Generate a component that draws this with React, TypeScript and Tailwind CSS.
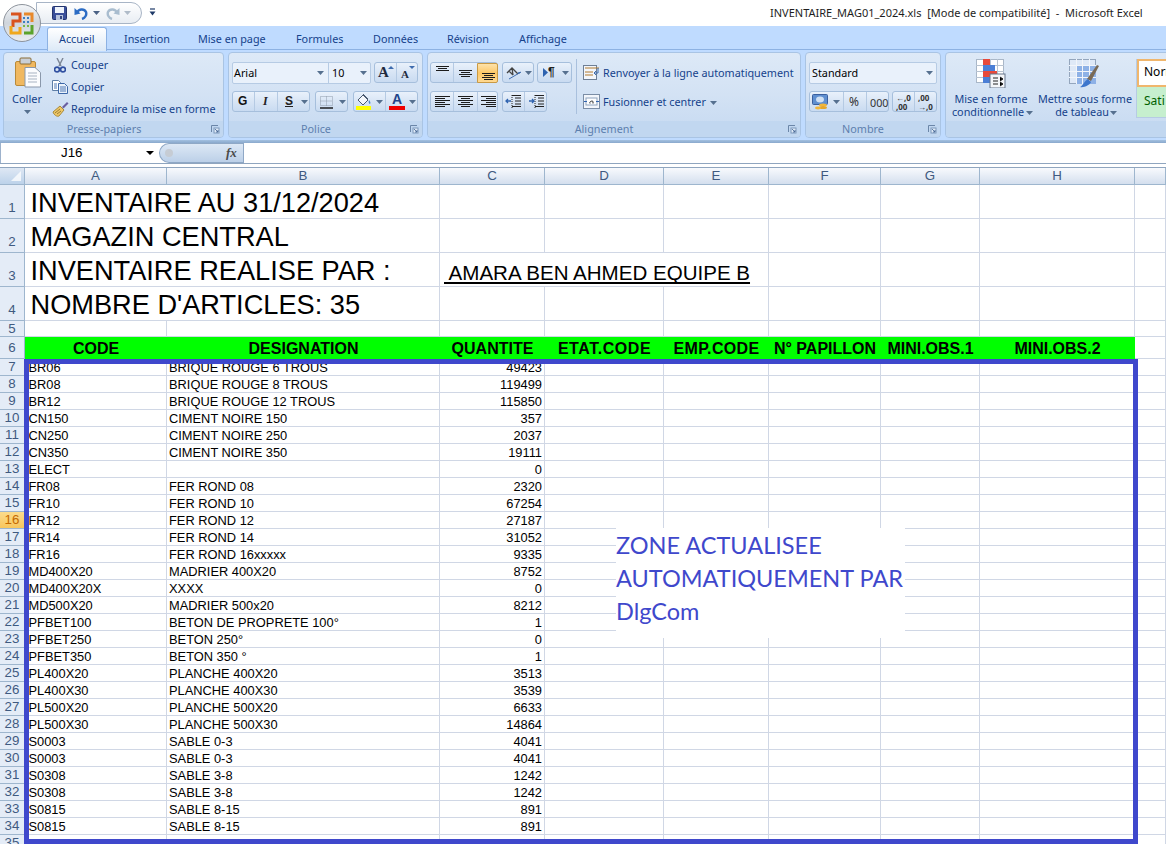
import React from "react";

const tabs: [string, number][] = [["Insertion", 124], ["Mise en page", 198], ["Formules", 296], ["Données", 373], ["Révision", 447], ["Affichage", 519]];
const rows: [string, string, string][] = [
  ["BR06", "BRIQUE ROUGE 6 TROUS", "49423"], ["BR08", "BRIQUE ROUGE 8 TROUS", "119499"], ["BR12", "BRIQUE ROUGE 12 TROUS", "115850"],
  ["CN150", "CIMENT NOIRE 150", "357"], ["CN250", "CIMENT NOIRE 250", "2037"], ["CN350", "CIMENT NOIRE 350", "19111"],
  ["ELECT", "", "0"], ["FR08", "FER ROND 08", "2320"], ["FR10", "FER ROND 10", "67254"], ["FR12", "FER ROND 12", "27187"],
  ["FR14", "FER ROND 14", "31052"], ["FR16", "FER ROND 16xxxxx", "9335"], ["MD400X20", "MADRIER 400X20", "8752"],
  ["MD400X20X", "XXXX", "0"], ["MD500X20", "MADRIER 500x20", "8212"], ["PFBET100", "BETON DE PROPRETE 100°", "1"],
  ["PFBET250", "BETON 250°", "0"], ["PFBET350", "BETON 350 °", "1"], ["PL400X20", "PLANCHE 400X20", "3513"],
  ["PL400X30", "PLANCHE 400X30", "3539"], ["PL500X20", "PLANCHE 500X20", "6633"], ["PL500X30", "PLANCHE 500X30", "14864"],
  ["S0003", "SABLE 0-3", "4041"], ["S0003", "SABLE 0-3", "4041"], ["S0308", "SABLE 3-8", "1242"], ["S0308", "SABLE 3-8", "1242"],
  ["S0815", "SABLE 8-15", "891"], ["S0815", "SABLE 8-15", "891"], ["S1524", "SABLE 15-24", "1115"],
];
const cols = ["A", "B", "C", "D", "E", "F", "G", "H", ""];
const greenHead = ["CODE", "DESIGNATION", "QUANTITE", "ETAT.CODE", "EMP.CODE", "N° PAPILLON", "MINI.OBS.1", "MINI.OBS.2"];
const GRID = "grid grid-cols-[25px_142px_273px_105px_119px_105px_112px_99px_155px_31px]";
const line = "border-r border-b border-[#d0d7e5]";
const rowHead = "flex justify-center border-r border-b border-[#9eb6ce] text-[13.33px] ";

const Caret = ({ x, y, c = "#56708f" }: { x: number; y: number; c?: string }) => (
  <svg className="absolute" style={{ left: x, top: y }} width="7" height="4" viewBox="0 0 7 4"><path d="M0 0h7L3.5 4z" fill={c} /></svg>
);
const Launcher = ({ x }: { x: number }) => (
  <svg className="absolute" style={{ left: x, top: 125 }} width="9" height="9" viewBox="0 0 9 9" fill="none">
    <path d="M.5 7V.5H7" stroke="#6b86a8" /><rect x="3" y="3" width="5" height="5" fill="#dfeaf7" stroke="#7d98ba" /><path d="M4 4l3 3M5 7h2V5" stroke="#3d5f8f" strokeWidth=".8" />
  </svg>
);
const Box = ({ l, t, w, h = 21 }: { l: number; t: number; w: number; h?: number }) => (
  <div className="absolute rounded-[3px] border border-[#a6bfdc] bg-gradient-to-b from-[#e9f1fb] via-[#d8e5f5] to-[#c9dbf1]" style={{ left: l, top: t, width: w, height: h }} />
);
const Sep = ({ x, y }: { x: number; y: number }) => <div className="absolute w-px h-[19px] bg-[#b5cae3]" style={{ left: x, top: y }} />;
const Lines = ({ x, y, rows: r }: { x: number; y: number; rows: [number, number][] }) => (
  <svg className="absolute" style={{ left: x, top: y }} width="18" height="15" viewBox="0 0 18 15">
    {r.map(([a, b], i) => <path key={i} d={`M${a} ${i * 2 + .5}H${b}`} stroke="#1c1c1c" />)}
  </svg>
);
const L = ({ x, y, children, cls = "" }: { x: number; y: number; children: React.ReactNode; cls?: string }) => (
  <span className={"absolute whitespace-nowrap leading-[14px] " + cls} style={{ left: x, top: y }}>{children}</span>
);
const C = ({ cx, y, children, cls = "" }: { cx: number; y: number; children: React.ReactNode; cls?: string }) => (
  <span className={"absolute whitespace-nowrap leading-[14px] -translate-x-1/2 " + cls} style={{ left: cx, top: y }}>{children}</span>
);
const Group = ({ l, w }: { l: number; w: number }) => (
  <div className="absolute top-[52px] h-[86px] rounded-[4px] border border-[#a9c4e4] bg-gradient-to-b from-[#dde9f7] via-[#d3e2f4] to-[#c5d9f1] overflow-hidden" style={{ left: l, width: w }}>
    <div className="absolute left-0 right-0 bottom-0 h-[16px] bg-[#c1d7f0]" />
  </div>
);

export default function App() {
  return (
    <div className="relative w-[1166px] h-[844px] overflow-hidden bg-white font-[Liberation_Sans,sans-serif] text-black">
      {/* title bar */}
      <div className="absolute inset-x-0 top-0 h-[26px] bg-white">
        <div className="absolute left-[36px] top-[2px] w-[106px] h-[22px] rounded-r-[12px] border border-[#a8b5c6] bg-gradient-to-b from-[#ffffff] to-[#e8edf3]" />
        <svg className="absolute left-[52px] top-[6px]" width="15" height="14" viewBox="0 0 15 14">
          <rect x=".5" y=".5" width="14" height="13" rx="1" fill="#3a4f9a" stroke="#24346f" />
          <rect x="3" y="1" width="9" height="6" fill="#eef3fb" /><rect x="4" y="9" width="7" height="5" fill="#b8c4dd" /><rect x="8" y="10" width="2" height="3" fill="#33457f" />
        </svg>
        <svg className="absolute left-[74px] top-[6px]" width="14" height="14" viewBox="0 0 14 14" fill="none">
          <path d="M3 7c1-4 7-5 9-1 1 3-1 6-4 7" stroke="#2b6cc4" strokeWidth="2.4" /><path d="M.5 2l6 5.5L.5 9z" fill="#2b6cc4" />
        </svg>
        <Caret x={93} y={11} c="#4a6285" />
        <svg className="absolute left-[106px] top-[6px]" width="14" height="14" viewBox="0 0 14 14" fill="none">
          <path d="M11 7c-1-4-7-5-9-1-1 3 1 6 4 7" stroke="#a9bdcf" strokeWidth="2.4" /><path d="M13.5 2l-6 5.5 6 1.5z" fill="#a9bdcf" />
        </svg>
        <Caret x={124} y={11} c="#b0bcc9" />
        <svg className="absolute left-[149px] top-[8px]" width="7" height="8" viewBox="0 0 7 8"><path d="M1 1h5" stroke="#1f3a68" strokeWidth="1.2" /><path d="M.5 3.5h6L3.5 7.5z" fill="#1f3a68" /></svg>
        <span className="absolute left-[770px] top-[5px] text-[11px] leading-[16px] whitespace-pre text-[#1e1e1e] font-[Noto_Sans,sans-serif]">INVENTAIRE_MAG01_2024.xls  [Mode de compatibilité]  -  Microsoft Excel</span>
      </div>

      {/* ribbon */}
      <div className="absolute inset-x-0 top-[26px] h-[114px] bg-[#bfdbff]">
        <div className="absolute inset-x-0 top-[23px] h-px bg-[#8db2e3]" />
      </div>
      <div className="absolute inset-x-0 top-[140px] h-[3px] bg-gradient-to-b from-[#a3c0e0] to-[#8aa9cc]" />
      <div className="absolute left-[47px] top-[27px] w-[60px] h-[24px] rounded-t-[3px] border border-b-0 border-[#8db2e3] bg-gradient-to-b from-[#ffffff] to-[#dce9f7]" />

      {/* office button */}
      <div className="absolute left-[3px] top-[4px] w-[38px] h-[38px] rounded-full border border-[#8d939c] bg-gradient-to-b from-[#f4f6f9] via-[#cfd5dc] to-[#e9edf1]" />
      <svg className="absolute left-[9px] top-[11px]" width="26" height="24" viewBox="0 0 26 24" fill="none">
        <path d="M2 3h9v7H4v6" stroke="#d9531e" strokeWidth="3" /><path d="M15 3h8v8" stroke="#e8892c" strokeWidth="3" />
        <path d="M2 15v7h9v-6" stroke="#f0a81c" strokeWidth="3" /><path d="M23 14v8h-8" stroke="#5ba32b" strokeWidth="3" />
        <path d="M14 7h2M18 7h2M14 11h2M18 11h2" stroke="#3d7ec4" strokeWidth="2" /><path d="M14 15h2M18 15h2" stroke="#79b84a" strokeWidth="2" />
      </svg>

      <div className="absolute inset-0 font-[Noto_Sans,sans-serif] text-[10.8px] text-[#15428b]">
        <L x={59} y={32}>Accueil</L>
        {tabs.map(([t, x]) => <L key={t} x={x} y={32}>{t}</L>)}

        <Group l={3} w={221} />
        <Group l={228} w={195} />
        <Group l={427} w={374} />
        <Group l={805} w={136} />
        <Group l={945} w={225} />

        {/* clipboard */}
        <svg className="absolute left-[15px] top-[57px]" width="27" height="32" viewBox="0 0 27 32">
          <rect x=".5" y="4.5" width="20" height="24" rx="1.5" fill="#f0b860" stroke="#b98a3a" />
          <rect x="5" y="1" width="11" height="6" rx="1" fill="#c9cfd6" stroke="#8b6d35" />
          <path d="M10 10.5h10l5.5 5v14.5H10z" fill="#fbfcfe" stroke="#8a98ab" />
          <path d="M13 16h9M13 19h9M13 22h9M13 25h9" stroke="#a8b3c2" />
        </svg>
        <L x={12} y={92} cls="text-[11px]">Coller</L>
        <Caret x={24} y={110} />
        <svg className="absolute left-[54px] top-[58px]" width="12" height="15" viewBox="0 0 12 15" fill="none">
          <path d="M3 0l4 8M9 0L5 8" stroke="#7b8594" strokeWidth="1.4" /><circle cx="3" cy="11.5" r="2.4" stroke="#2f4fa0" strokeWidth="1.6" /><circle cx="9" cy="11.5" r="2.4" stroke="#2f4fa0" strokeWidth="1.6" />
        </svg>
        <L x={71} y={58}>Couper</L>
        <svg className="absolute left-[52px] top-[80px]" width="16" height="14" viewBox="0 0 16 14">
          <path d="M.5.5h6l2 2v8h-8z" fill="#fff" stroke="#5e7ea6" /><path d="M6.5 3.5h6l3 3v7h-9z" fill="#eaf2fb" stroke="#3d68a8" /><path d="M8 7h6M8 9h6M8 11h6M2 4h3M2 6h3M2 8h3" stroke="#4f78b4" />
        </svg>
        <L x={71} y={80}>Copier</L>
        <svg className="absolute left-[52px] top-[101px]" width="17" height="16" viewBox="0 0 17 16">
          <path d="M10 6l5-5 1.5 1.5-5 5z" fill="#6a5fa0" /><path d="M1 11l7-6 4 4-5 6c-2 1-5-1-6-4z" fill="#efc766" stroke="#a88a3c" />
          <path d="M3 12l5-4M5 13l4-3" stroke="#9a7d35" />
        </svg>
        <L x={71} y={102}>Reproduire la mise en forme</L>
        <C cx={104} y={122} cls="text-[#5d7fae]">Presse-papiers</C>
        <Launcher x={211} />

        {/* font */}
        <div className="absolute left-[232px] top-[62px] w-[139px] h-[22px] rounded-[2px] border border-[#b6cbe4] bg-[#e9f1fb]" />
        <div className="absolute left-[328px] top-[62px] w-px h-[22px] bg-[#b6cbe4]" />
        <L x={234} y={66} cls="text-black">Arial</L>
        <Caret x={317} y={71} />
        <L x={332} y={66} cls="text-black">10</L>
        <Caret x={360} y={71} />
        <Box l={374} t={62} w={44} />
        <span className="absolute left-[378px] top-[64px] text-[15px] leading-[16px] font-bold text-[#1f2b3e] font-[Liberation_Serif,serif]">A</span>
        <svg className="absolute left-[388px] top-[66px]" width="6" height="3"><path d="M0 3h6L3 0z" fill="#3f6cae" /></svg>
        <Sep x={396} y={63} />
        <span className="absolute left-[401px] top-[67px] text-[11px] leading-[14px] font-bold text-[#1f2b3e] font-[Liberation_Serif,serif]">A</span>
        <svg className="absolute left-[409px] top-[66px]" width="6" height="3"><path d="M0 0h6L3 3z" fill="#3f6cae" /></svg>

        <Box l={232} t={91} w={78} />
        <Sep x={254} y={92} /><Sep x={277} y={92} />
        <span className="absolute left-[238px] top-[94px] text-[12px] leading-[14px] font-bold text-[#111] font-[Liberation_Sans,sans-serif]">G</span>
        <span className="absolute left-[263px] top-[94px] text-[12px] leading-[14px] font-bold italic text-[#222] font-[Liberation_Serif,serif]">I</span>
        <span className="absolute left-[285px] top-[94px] text-[12px] leading-[14px] font-bold underline text-[#222] font-[Liberation_Sans,sans-serif]">S</span>
        <Caret x={301} y={100} />
        <Box l={315} t={91} w={33} />
        <svg className="absolute left-[320px] top-[96px]" width="13" height="13" viewBox="0 0 13 13" fill="none"><path d="M.5.5h12v9H.5zM6.5.5v9M.5 5h12" stroke="#8f9bab" strokeDasharray="1 1" /><path d="M0 12h13" stroke="#111" strokeWidth="1.4" /></svg>
        <Caret x={339} y={100} />
        <Box l={353} t={91} w={65} />
        <Sep x={385} y={92} />
        <svg className="absolute left-[356px] top-[93px]" width="16" height="17" viewBox="0 0 16 17">
          <path d="M2 7l5-5 5 5-5 5z" fill="#f4f7fb" stroke="#4a5a70" /><path d="M7 1l5 5" stroke="#4a5a70" /><path d="M13 7c1 1 2 3 1 4-1 0-2-2-1-4z" fill="#4a86c8" /><rect y="13" width="15" height="4" fill="#ffff00" />
        </svg>
        <Caret x={376} y={100} />
        <span className="absolute left-[392px] top-[92px] text-[14px] leading-[14px] font-bold text-[#22448a] font-[Liberation_Sans,sans-serif]">A</span>
        <div className="absolute left-[389px] top-[106px] w-[16px] h-[4px] bg-[#f00000]" />
        <Caret x={409} y={100} />
        <C cx={316} y={122} cls="text-[#5d7fae]">Police</C>
        <Launcher x={410} />

        {/* alignment */}
        <Box l={430} t={62} w={68} />
        <Sep x={453} y={63} />
        <div className="absolute left-[477px] top-[63px] w-[21px] h-[20px] rounded-r-[2px] border border-[#c99a45] bg-gradient-to-b from-[#fde2a9] via-[#fdc866] to-[#ffd991]" />
        <Lines x={435} y={66} rows={[[1, 14], [3, 12], [1, 14]]} />
        <Lines x={458} y={70} rows={[[1, 14], [3, 12], [1, 14], [3, 12]]} />
        <Lines x={481} y={73} rows={[[1, 14], [3, 12], [1, 14], [3, 12]]} />
        <Box l={502} t={62} w={32} />
        <svg className="absolute left-[506px] top-[66px]" width="18" height="15" viewBox="0 0 18 15" fill="none"><path d="M1 7l5-5 6 6M3 5l4 4M6 2l1 7" stroke="#444" strokeWidth="1.3" /><path d="M3 13l12-7" stroke="#3f6cae" /><path d="M15 6l-3 0 1 2z" fill="#3f6cae" /></svg>
        <Caret x={525} y={71} />
        <Box l={537} t={62} w={35} />
        <svg className="absolute left-[543px] top-[68px]" width="5" height="9"><path d="M0 0l5 4.5L0 9z" fill="#2e63b0" /></svg>
        <span className="absolute left-[548px] top-[65px] text-[12px] leading-[14px] font-bold text-[#222] font-[Liberation_Sans,sans-serif]">¶</span>
        <Caret x={562} y={71} />
        <Box l={430} t={91} w={68} />
        <Sep x={453} y={92} /><Sep x={477} y={92} />
        <Lines x={434} y={96} rows={[[1, 16], [1, 11], [1, 16], [1, 11], [1, 16], [1, 11]]} />
        <Lines x={457} y={96} rows={[[1, 16], [4, 13], [1, 16], [4, 13], [1, 16], [4, 13]]} />
        <Lines x={480} y={96} rows={[[1, 16], [6, 16], [1, 16], [6, 16], [1, 16], [6, 16]]} />
        <Box l={502} t={91} w={45} />
        <Sep x={524} y={92} />
        <svg className="absolute left-[505px] top-[94px]" width="18" height="15" viewBox="0 0 18 15" fill="none"><path d="M7 1.5h9M10 4h6M10 7h6M10 10h6M7 12.5h9" stroke="#222" /><path d="M7 1v13" stroke="#222" strokeDasharray="1 1" /><path d="M6 7H1M3 5L1 7l2 2" stroke="#2e63b0" strokeWidth="1.3" /></svg>
        <svg className="absolute left-[528px] top-[94px]" width="18" height="15" viewBox="0 0 18 15" fill="none"><path d="M7 1.5h9M10 4h6M10 7h6M10 10h6M7 12.5h9" stroke="#222" /><path d="M7 1v13" stroke="#222" strokeDasharray="1 1" /><path d="M1 7h5M4 5l2 2-2 2" stroke="#2e63b0" strokeWidth="1.3" /></svg>
        <div className="absolute left-[576px] top-[59px] w-px h-[55px] bg-[#a9c0dd]" />
        <svg className="absolute left-[583px] top-[65px]" width="17" height="15" viewBox="0 0 17 15" fill="none">
          <rect x=".5" y=".5" width="13" height="14" fill="#f3f6fb" stroke="#6e7f95" /><path d="M2 3h14M2 7h8M2 10h8" stroke="#b27a2f" /><path d="M15 3v5h-3M13 6l-2 2 2 2" stroke="#3f6cae" />
        </svg>
        <L x={603} y={66}>Renvoyer à la ligne automatiquement</L>
        <svg className="absolute left-[583px] top-[94px]" width="17" height="15" viewBox="0 0 17 15" fill="none">
          <rect x=".5" y=".5" width="16" height="14" fill="#f3f6fb" stroke="#7b8da5" /><rect x="3" y="4" width="11" height="7" fill="#fff" stroke="#8da2bd" /><path d="M1 7.5h3M13 7.5h3" stroke="#2e63b0" /><path d="M7 9.5c-1-2 2-3 3-2v2" stroke="#222" />
        </svg>
        <L x={603} y={95}>Fusionner et centrer</L>
        <Caret x={710} y={101} />
        <C cx={604} y={122} cls="text-[#5d7fae]">Alignement</C>
        <Launcher x={788} />

        {/* number */}
        <div className="absolute left-[809px] top-[62px] w-[128px] h-[22px] rounded-[2px] border border-[#b6cbe4] bg-[#e9f1fb]" />
        <L x={812} y={66} cls="text-black">Standard</L>
        <Caret x={926} y={71} />
        <Box l={809} t={91} w={80} />
        <Sep x={843} y={92} /><Sep x={866} y={92} />
        <svg className="absolute left-[812px] top-[94px]" width="18" height="16" viewBox="0 0 18 16"><rect x=".5" y=".5" width="15" height="10" rx="1" fill="#5f8fd0" stroke="#3a5f9e" /><ellipse cx="8" cy="5.5" rx="4" ry="3" fill="#cfe0f4" /><ellipse cx="11" cy="11" rx="4" ry="1.6" fill="#f1b63b" /><ellipse cx="11" cy="13.5" rx="4" ry="1.6" fill="#e6a72a" /><ellipse cx="6" cy="14" rx="3" ry="1.4" fill="#f1b63b" /></svg>
        <Caret x={833} y={100} />
        <span className="absolute left-[849px] top-[95px] text-[12px] leading-[14px] text-[#333]">%</span>
        <span className="absolute left-[870px] top-[96px] leading-[14px] text-[#333]">000</span>
        <Box l={892} t={91} w={45} />
        <Sep x={914} y={92} />
        <span className="absolute left-[896px] top-[93px] text-[8px] leading-[9px] font-bold text-[#333]">←,0<br />,00</span>
        <span className="absolute left-[918px] top-[93px] text-[8px] leading-[9px] font-bold text-[#333]">,00<br />→,0</span>
        <C cx={863} y={122} cls="text-[#5d7fae]">Nombre</C>
        <Launcher x={928} />

        {/* styles */}
        <svg className="absolute left-[976px] top-[59px]" width="30" height="29" viewBox="0 0 30 29">
          <rect x=".5" y=".5" width="27" height="23" fill="#fff" stroke="#a9b7c8" />
          <path d="M7.5 0v24M14.5 0v24M21.5 0v24M0 6.5h28M0 12.5h28M0 18.5h28" stroke="#b8c3d1" />
          <rect x="7" y="0" width="7" height="6" fill="#e8493a" /><rect x="7" y="6" width="12" height="6" fill="#4b7fd6" /><rect x="7" y="12" width="14" height="6" fill="#e8493a" /><rect x="7" y="18" width="7" height="6" fill="#4b7fd6" />
          <rect x="14" y="15" width="15" height="14" fill="#f4f6f9" stroke="#65748a" /><path d="M17 19h5M17 22h5M17 25h5M24 18l3 2-3 2M24 23l3 2-3 2" stroke="#222" />
        </svg>
        <C cx={991} y={92}>Mise en forme</C>
        <C cx={988} y={105}>conditionnelle</C>
        <Caret x={1026} y={111} />
        <svg className="absolute left-[1069px] top-[59px]" width="31" height="29" viewBox="0 0 31 29">
          <rect x=".5" y=".5" width="26" height="24" fill="#dfe9f7" stroke="#94a6bd" /><rect x="7" y="7" width="20" height="18" fill="#8eb1e6" />
          <path d="M7.5 0v25M13.5 0v25M20.5 0v25M0 6.5h27M0 12.5h27M0 18.5h27" stroke="#f2f5fa" />
          <path d="M18 20l10-14 2 1-8 15z" fill="#7a6a55" /><path d="M11 28c3-1 4-6 8-8l3 3c-1 3-7 6-11 5z" fill="#3d76cc" />
        </svg>
        <C cx={1085} y={92}>Mettre sous forme</C>
        <C cx={1082} y={105}>de tableau</C>
        <Caret x={1110} y={111} />
        <div className="absolute left-[1136px] top-[59px] w-[40px] h-[59px] border border-[#b6cbe4]" />
        <div className="absolute left-[1137px] top-[59px] w-[40px] h-[28px] border-2 border-[#f0b66c] bg-white" />
        <div className="absolute left-[1137px] top-[87px] w-[40px] h-[30px] bg-[#c6efce]" />
        <L x={1144} y={65} cls="text-black text-[12px]">Norr</L>
        <L x={1144} y={94} cls="text-[#006100] text-[12px]">Sati</L>
      </div>

      {/* formula bar */}
      <div className="absolute inset-x-0 top-[143px] h-[20px] bg-white">
        <div className="absolute left-0 top-0 w-[159px] h-[20px] border-l border-[#9db2cc]" />
        <span className="absolute left-[61px] top-[2px] text-[13.33px] leading-[16px]">J16</span>
        <svg className="absolute left-[146px] top-[8px]" width="8" height="4"><path d="M0 0h8L4 4z" fill="#000" /></svg>
        <div className="absolute left-[159px] top-0 w-[85px] h-[20px] rounded-l-[10px] border-l border-t border-b border-[#8fa8c6] bg-gradient-to-b from-[#dde8f5] to-[#bcd0e8]" />
        <div className="absolute left-[165px] top-[6px] w-[8px] h-[8px] rounded-full bg-[#c6ccd4]" />
        <span className="absolute left-[226px] top-[2px] text-[13px] leading-[16px] italic font-bold text-[#4a4a4a] font-[Liberation_Serif,serif]">fx</span>
        <div className="absolute left-[243px] top-0 w-px h-[20px] bg-[#8fa8c6]" />
      </div>
      <div className="absolute inset-x-0 top-[163px] h-px bg-[#8fa5bf]" />
      <div className="absolute inset-x-0 top-[167px] h-px bg-[#8fa5bf]" />

      {/* sheet */}
      <div className={GRID + " absolute left-0 top-[168px] w-[1166px] h-[676px] overflow-hidden grid-rows-[17px_34px_34px_34px_34px_16px_22px_repeat(29,17px)] text-[12.85px] leading-[16px]"}>
        <div className="relative border-r border-b border-[#9eb6ce] bg-gradient-to-b from-[#dfe8f4] to-[#bcd2ea]">
          <svg className="absolute right-[3px] bottom-[3px]" width="10" height="10"><path d="M10 0v10H0z" fill="#fff" opacity=".75" /></svg>
        </div>
        {cols.map((c, i) => (
          <div key={i} className="flex items-center justify-center border-r border-b border-[#9eb6ce] bg-gradient-to-b from-[#f8fafd] to-[#d4dfee] text-[#3f5a80] text-[13.33px]">{c}</div>
        ))}

        {[
          ["1", "INVENTAIRE AU 31/12/2024"],
          ["2", "MAGAZIN CENTRAL"],
          ["3", "INVENTAIRE REALISE PAR :"],
          ["4", "NOMBRE D'ARTICLES: 35"],
        ].map(([n, t]) => (
          <React.Fragment key={n}>
            <div className={rowHead + "items-end pb-[2px] bg-[#e4ecf7] text-[#3f5a80]"}>{n}</div>
            <div className={"col-span-2 flex items-end pl-[5.5px] text-[27.2px] leading-[31px] whitespace-nowrap " + line}>{t}</div>
            {n === "3" ? (
              <>
                <div className={"col-span-3 flex items-end pl-[4px] pb-[1px] text-[20.55px] leading-[24px] whitespace-pre underline decoration-[2px] underline-offset-[2px] [text-decoration-skip-ink:none] " + line}> AMARA BEN AHMED EQUIPE B</div>
                {[0, 1, 2, 3].map((i) => <div key={i} className={line} />)}
              </>
            ) : (
              [0, 1, 2, 3, 4, 5, 6].map((i) => <div key={i} className={line} />)
            )}
          </React.Fragment>
        ))}

        <div className={rowHead + "items-center bg-[#e4ecf7] text-[#3f5a80]"}>5</div>
        {cols.map((_, i) => <div key={i} className={line} />)}

        <div className={rowHead + "items-center bg-[#e4ecf7] text-[#3f5a80]"}>6</div>
        {greenHead.map((h) => (
          <div key={h} className={"flex items-center justify-center pt-[1px] bg-[#00ff00] text-[16px] leading-[20px] font-bold whitespace-nowrap " + (h === "ETAT.CODE" ? "tracking-[0.55px]" : h === "EMP.CODE" ? "tracking-[0.35px]" : "")}>{h}</div>
        ))}
        <div className={line} />

        {rows.map((r, i) => (
          <React.Fragment key={i}>
            <div className={rowHead + "items-center " + (i + 7 === 16 ? "bg-gradient-to-b from-[#fbdc8c] to-[#f8c65c] text-[#c46a00]" : "bg-[#e4ecf7] text-[#3f5a80]")}>{i + 7}</div>
            <div className={"flex items-center pl-[3.5px] pt-[1px] whitespace-nowrap " + line}>{r[0]}</div>
            <div className={"flex items-center pl-[2px] pt-[1px] whitespace-nowrap " + line}>{r[1]}</div>
            <div className={"flex items-center justify-end pr-[2px] pt-[1px] " + line}>{r[2]}</div>
            {[0, 1, 2, 3, 4, 5].map((k) => <div key={k} className={line} />)}
          </React.Fragment>
        ))}
      </div>

      {/* overlay */}
      <div className="absolute left-[24px] top-[359px] w-[1114px] h-[485px] border-[5px] border-[#3f48cc]" />
      <div className="absolute left-[616px] top-[528px] w-[289px] h-[110px] bg-white pt-[1px] text-[23.5px] leading-[33px] text-[#3f48cc] font-[Lato,sans-serif] whitespace-nowrap">
        <div>ZONE ACTUALISEE</div>
        <div>AUTOMATIQUEMENT PAR</div>
        <div>DlgCom</div>
      </div>
    </div>
  );
}
